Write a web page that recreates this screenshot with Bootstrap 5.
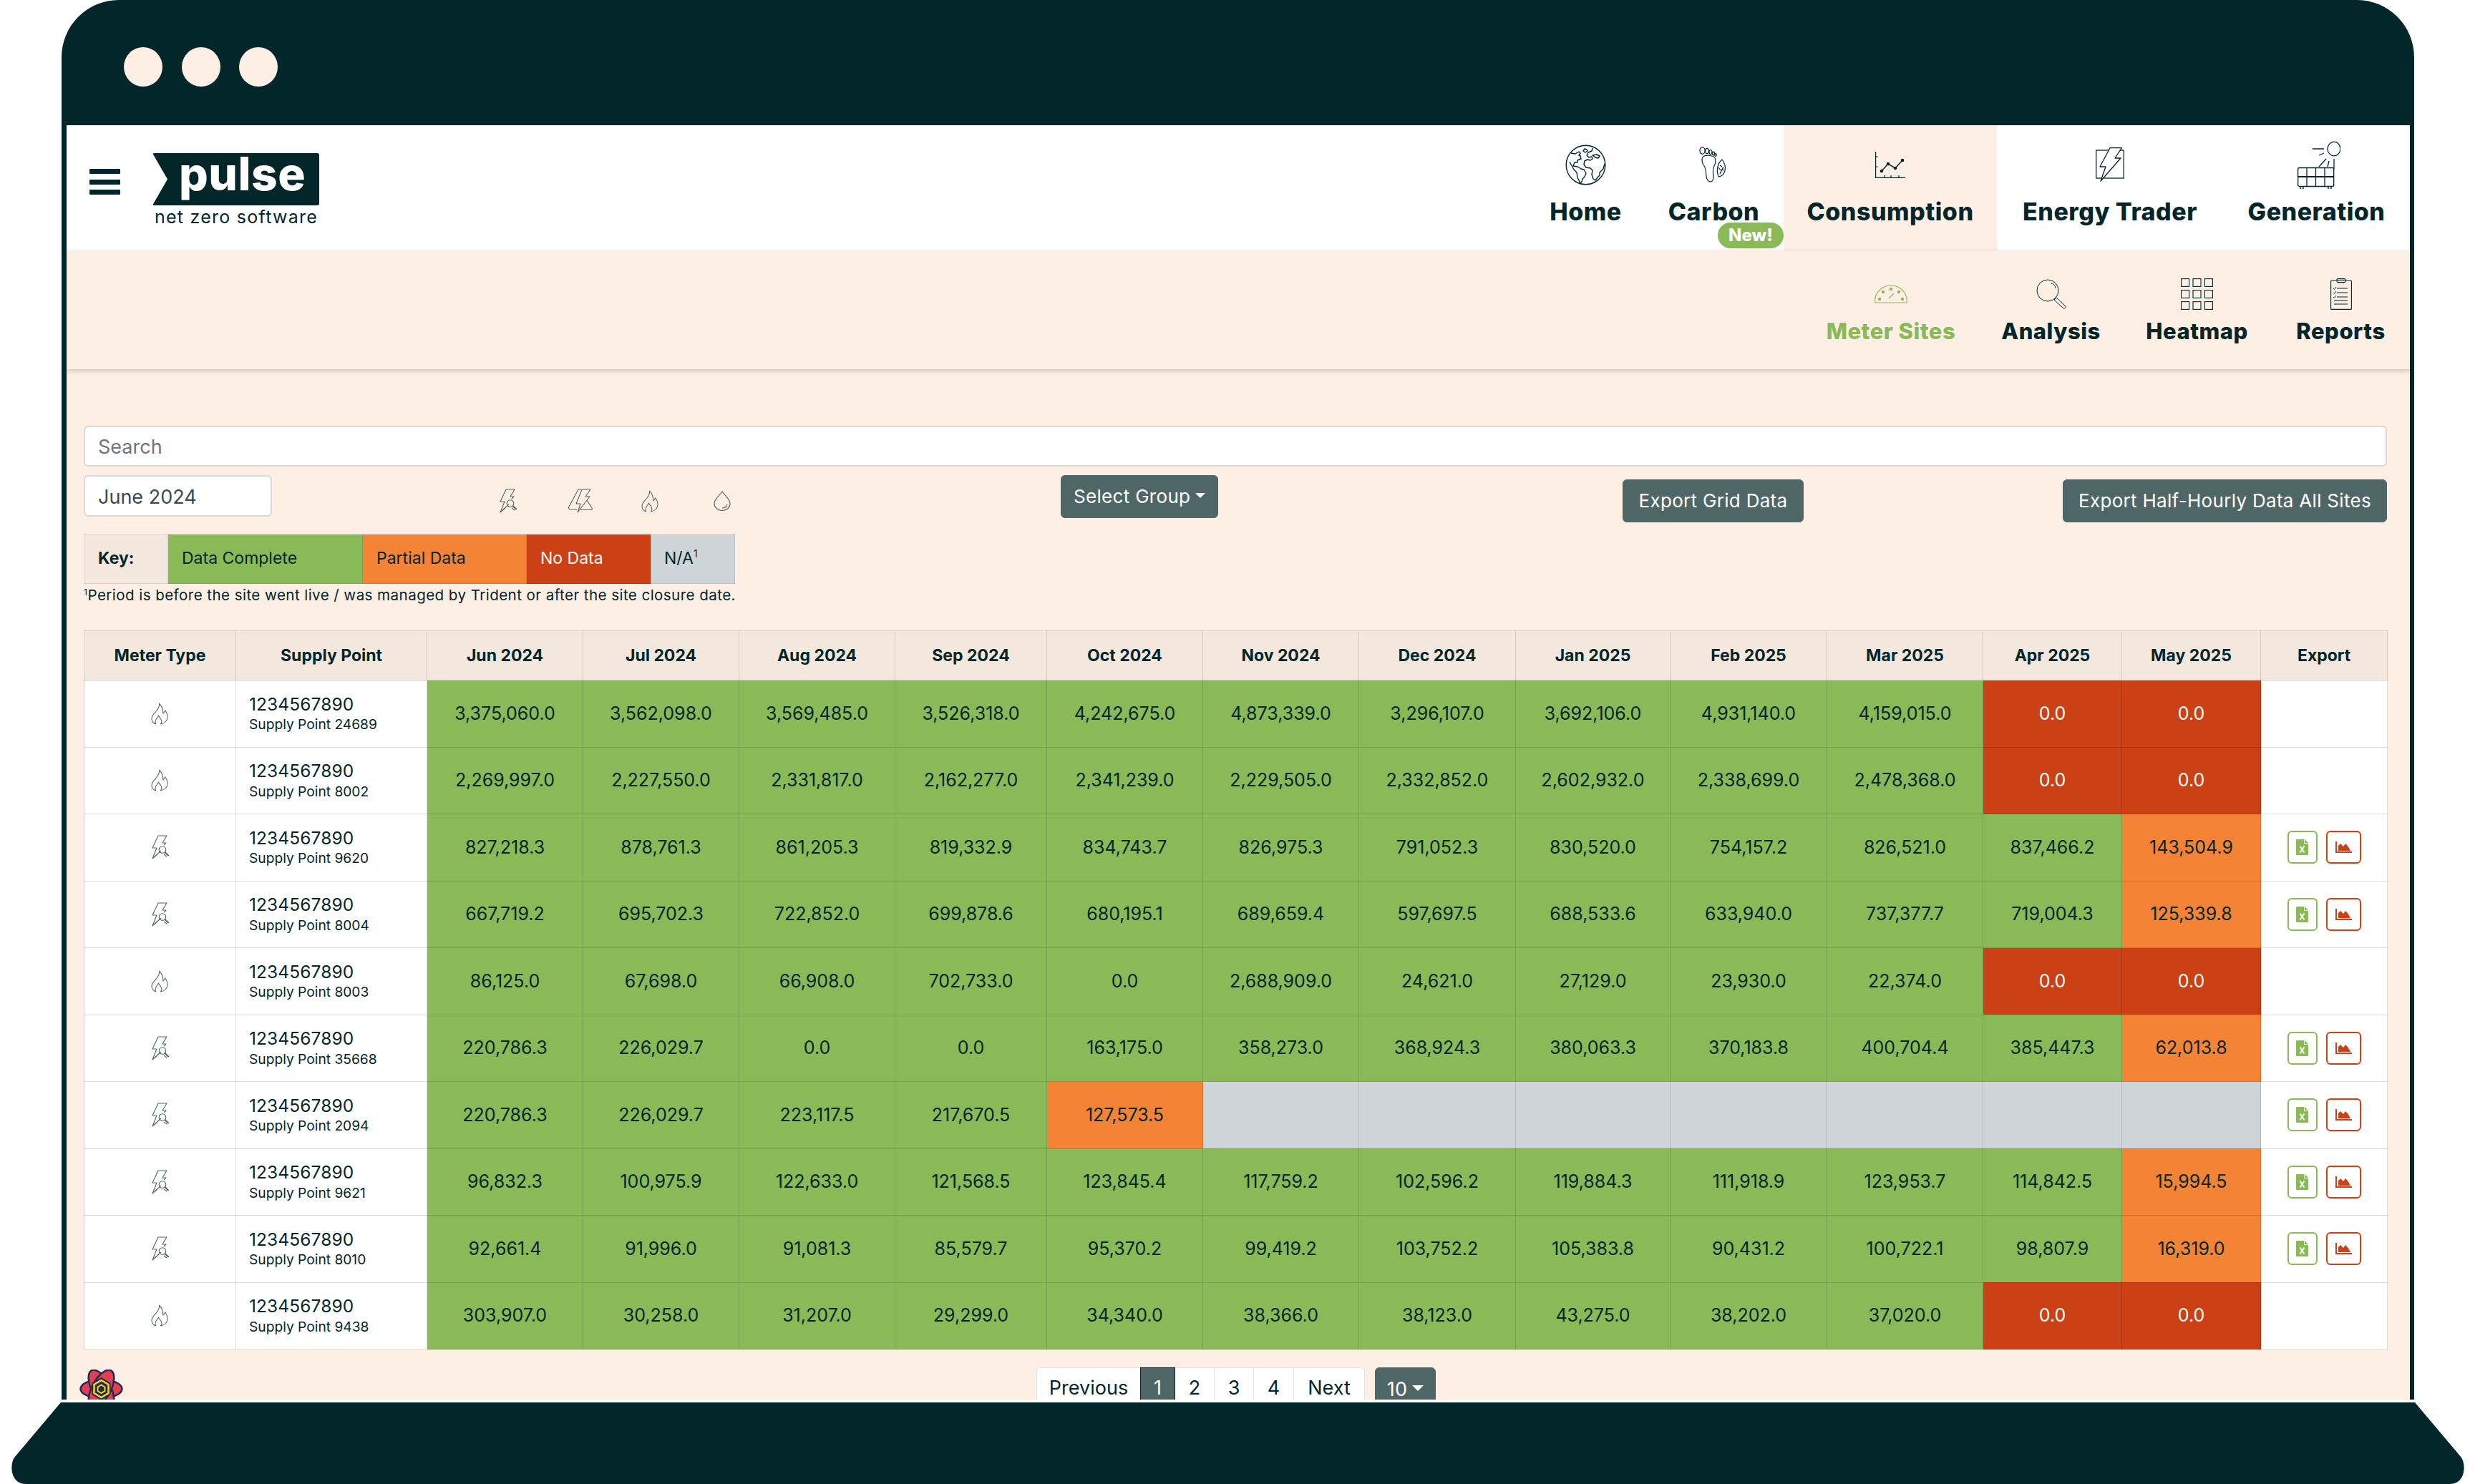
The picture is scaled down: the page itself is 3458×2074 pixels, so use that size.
<!DOCTYPE html>
<html lang="en"><head><meta charset="utf-8"><title>Pulse</title>
<link href="https://cdn.jsdelivr.net/npm/bootstrap@5.3.0/dist/css/bootstrap.min.css" rel="stylesheet">
<style>
:root{--ink:#03262a;--cream:#fdefe4;--tan:#f4e7de;--ok:#8ab957;--part:#f48335;--none:#cc4015;--na:#cfd4d9;--slate:#4f6666}
html,body{margin:0;background:#fff}
body{width:3458px;height:2074px;overflow:hidden;font-family:Inter,"Liberation Sans",sans-serif;color:var(--ink)}
.device{width:3287px;margin-left:86px}
.bezel-top{height:175px;background:var(--ink);border-radius:80px 80px 0 0;padding:66px 0 0 87px;gap:26.5px}
.led{width:54px;height:55px;background:var(--cream)}
.screen{height:1781px;border-left:7px solid var(--ink);border-right:6px solid var(--ink);background:var(--cream);overflow:hidden;width:3287px}
.base-svg{display:block;margin-top:4px}
.topbar{height:176px;background:#fff;padding:0}
.burger{width:43px;margin:61px 45px 0 32px;gap:7.5px}
.burger i{display:block;height:7px;background:var(--ink);border-radius:1px}
.logo-wrap{margin-top:39px}
.logo-flag{width:233px;height:73px;background:var(--ink);color:#fff;font-weight:800;font-size:64px;letter-spacing:.5px;line-height:57px;padding-left:37px;clip-path:polygon(0 0,100% 0,100% 100%,0 100%,21px 50%);border-radius:3px}
.logo-sub{font-size:25px;line-height:24px;letter-spacing:1.25px;margin:4px 0 0 3px;white-space:nowrap}
.tab{height:176px;padding-top:21px;color:var(--ink);text-decoration:none;font-weight:800;font-size:34px;letter-spacing:.5px;line-height:40px;position:relative;white-space:nowrap}
.tab-ico{height:68px;margin-bottom:12px}
.gen-ico{margin-left:7px}
.w-home{width:163px}.w-carbon{width:195px}.w-cons{width:298px}.w-trade{width:316px}.w-gen{width:261px}
.tab-on{background:var(--cream)}
.new-pill{position:absolute;right:0;top:136px;width:92px;height:36px;background:var(--ok);color:#fff;font-size:24px;line-height:36px;letter-spacing:0;text-align:center}
.subbar{height:165px;background:var(--cream);box-shadow:0 2px 7px rgba(60,30,10,.24);position:relative}
.subtab{height:165px;padding-top:37px;color:var(--ink);text-decoration:none;font-weight:800;font-size:31px;letter-spacing:.5px;line-height:36px;white-space:nowrap}
.subtab-ico{height:46px;margin-bottom:11px}
.w-meter{width:248px}.w-ana{width:199px}.w-heat{width:209px}.w-rep{width:193px}
.sub-on{color:var(--ok)}
.content{padding:79px 32px 0 24px}
.fld{height:57px;font-size:27px;padding:2px 18px 0;border-radius:6px;border:2px solid #d6d8da;color:#3b4a4f;font-family:inherit}
.fld::placeholder{color:#6c757d}
.fld-date{width:263px;height:58px}
.ctl-row{height:66px;margin-top:12px}
.type-ico{margin-left:318px;margin-top:19px;height:34px;color:var(--slate)}
.ti2{margin-left:72px}.ti3{margin-left:68px}.ti4{margin-left:76px}
.icon-tint{color:var(--slate)}
.icon-tint svg{display:block;margin:auto}
.btn-slate{background:var(--slate);border-color:var(--slate);color:#fff;font-size:26px;line-height:1;border-radius:6px;padding:0;height:60px;letter-spacing:.3px;white-space:nowrap}
.btn-slate:hover{background:var(--slate);color:#fff}
.b-group{width:220px;margin-left:461px}
.b-grid{width:253px;margin-left:565px;margin-top:6px}
.b-half{width:453px;margin-left:362px;margin-top:6px}
.keyt{width:909px;height:70px;margin:16px 0 0;font-size:23px;table-layout:fixed}
.keyt td{padding:0 0 2px 19px;vertical-align:middle;border:1px solid rgba(0,0,0,.1);color:var(--ink)}
.keyt td.k1{width:117px;background-color:var(--tan);font-weight:700}
.keyt td.k2{width:272px;background-color:var(--ok)}
.keyt td.k3{width:229px;background-color:var(--part)}
.keyt td.k4{width:173px;background-color:var(--none);color:#fff}
.keyt td.k5{width:118px;background-color:var(--na)}
.keyt sup,.foot-note sup{font-size:.6em;top:-.6em}
.foot-note{font-size:20.6px;line-height:24px;letter-spacing:.42px;margin:4px 0 0;white-space:nowrap}
.grid-wrap{margin-top:37px}
.data-grid{width:3218px;height:1004px;table-layout:fixed;margin:0;color:var(--ink);font-size:25px;--bs-table-bg:#fff;--bs-table-color:var(--ink)}
.data-grid th,.data-grid td{padding:0;vertical-align:middle;text-align:center;border:1.5px solid rgba(0,0,0,.13)}
.data-grid th{background-color:var(--tan);font-size:23px;height:69px;font-weight:700}
.data-grid td{height:93.5px}
.data-grid td.c-ok{background-color:var(--ok)}
.data-grid td.c-part{background-color:var(--part)}
.data-grid td.c-none{background-color:var(--none);color:#fff}
.data-grid td.c-na{background-color:var(--na)}
.data-grid td.sp{text-align:left;padding-left:18px;line-height:1}
.sp-id{display:block;font-size:24.5px;letter-spacing:.1px;margin-bottom:7px}
.sp-name{display:block;font-size:19.2px}
.c1{width:212px}.c2{width:267px}.c3{width:218px}.c4{width:212px}.c5{width:219px}.c6{width:216px}.c7{width:194px}.c8{width:177px}
.act{width:42px;height:46px;border:2px solid var(--ok);border-radius:6px;background:#fff}
.act-red{width:49px;border-color:var(--none);margin-left:12px}
.pager-row{height:60px;margin-top:25px;position:relative}
.atom{position:absolute;left:-6px;top:3px}
.pagination{margin:0;margin-left:1331px;--bs-pagination-color:var(--ink);--bs-pagination-border-color:#dee2e6;--bs-pagination-active-bg:var(--slate);--bs-pagination-active-border-color:var(--ink)}
.page-link{height:60px;padding:8px 0 0;text-align:center;line-height:40px;font-size:27px}
.pg-prev{width:146px}.pg-one{width:49px}.pg-two{width:56px}.pg-three{width:56px}.pg-four{width:57px}.pg-next{width:100px}
.b-size{width:85px;margin-left:14px;font-size:27px}
</style></head>
<body>
<svg class="d-none" xmlns="http://www.w3.org/2000/svg">
<symbol id="i-flame" viewBox="0 0 26 32"><path fill="none" stroke="currentColor" stroke-width="1.1" stroke-linejoin="round" d="M12 1c1 5-2 8-5 12C4 16 1 19 1 23c0 4 3 7 6 8-1.500-3-1-5 1-8 1-1.200 2-2.500 3-4.500 .5 2.500 2.500 3.500 3.500 5.500 1.500 2.500 1 5-.5 7 5-1 9-4 10-9 .5-4-1.500-8-3.500-11-.5 2-1.500 3.500-3 4.500C17.500 10 16 5 12 1z"/></symbol>
<symbol id="i-bolt-search" viewBox="0 0 24 34"><g fill="none" stroke="currentColor" stroke-width="1.1" stroke-linejoin="round"><path d="M9 1h12l-6 10h5l-3 3M13 22L1 33l6-15H1L9 1"/><path d="M7 28l-3 2M17 27l4 3"/><circle cx="15" cy="20.500" r="4.800"/><path d="M18.500 24l5 5" stroke-width="2"/></g></symbol>
<symbol id="i-bolt-tri" viewBox="0 0 34 34"><g fill="none" stroke="currentColor" stroke-width="1.100" stroke-linejoin="round"><path d="M19 1h12l-7 10h6L13 33l4-12h-6z"/><path d="M18 1h-4L1 25c-1 2 0 4 2 4h9"/><path d="M26 16l7 11c1 1.500 0 2.500-2 2.500H17"/></g></symbol>
<symbol id="i-drop" viewBox="0 0 24 28"><g fill="none" stroke="currentColor" stroke-width="1.100"><path d="M12 1C9 6 1 11 1 18a11 9.500 0 0 0 22 0C23 11 15 6 12 1z"/><path d="M12 24c3 0 6-1 7-5"/></g></symbol>
<symbol id="i-globe" viewBox="0 0 57 57"><g fill="none" stroke="currentColor" stroke-width="1.400" stroke-linejoin="round"><circle cx="28.500" cy="28.500" r="27.300"/><path d="M8 12l6 1 5-3 2 2-2 3 2 1 1 4-5 2 0 3-4 0-2 5 6 1 5 3 4 1 3 5-2 5-3 3-1 4-2 2-4-8-1-7-4-4-4-7-2-4"/><path d="M27 6l3 1 1 2-3 2-3-2z"/><path d="M38 5l-1 4-5 2-2 4 3 3 4-1 1 3-3 2-4-1-4 2-1 5 3 4 6 1 3 3-1 6 2 6 3 2 3-4 3-3 0-4 5-5 2-7"/><path d="M38 15l6-1 4 2-2 3-4-1z"/></g></symbol>
<symbol id="i-foot" viewBox="0 0 41 50"><g fill="none" stroke="currentColor" stroke-width="1.200" stroke-linejoin="round"><ellipse cx="4.500" cy="5.500" rx="3.500" ry="4.800"/><ellipse cx="11" cy="6" rx="2.300" ry="3.600"/><ellipse cx="16" cy="7.500" rx="2" ry="3"/><ellipse cx="20" cy="9.500" rx="1.500" ry="2.300"/><ellipse cx="23" cy="11.500" rx="1.200" ry="1.800"/><path d="M7 13C3 15 3 22 7 27c3 4 2 8 3 14 1 10 9 10 10 3 0-7-2-12 1-17 3-5 3-13-3-14-4-1-8-1-11 0z"/><path d="M32 18c-5 4-9 13-5 24 8-1 14-12 5-24z"/><path d="M29 38l5-10M30 33l-3-4M31 32l4 1M32 28l-3-2"/></g></symbol>
<symbol id="i-chart" viewBox="0 0 42 37"><g fill="none" stroke="currentColor" stroke-width="1.200"><path d="M.6 0v36.400H42"/><path d="M.6 7h3M.6 21h3M13 36v-3M22 36v-3M33 36v-3"/><path d="M9 27l9-10 10 6 10-11" stroke-width="1.500"/></g><g fill="currentColor"><circle cx="9" cy="27" r="2.300"/><circle cx="18" cy="17" r="2.300"/><circle cx="28" cy="23" r="2.300"/><circle cx="38" cy="12" r="2.300"/></g></symbol>
<symbol id="i-trade" viewBox="0 0 40 48"><rect x=".7" y="4" width="38.600" height="39" fill="none" stroke="currentColor" stroke-width="1.300"/><path d="M20 .7h16.500L27 15h8L7 47l7-20H6z" fill="#fff" stroke="currentColor" stroke-width="1.300" stroke-linejoin="round"/></symbol>
<symbol id="i-gen" viewBox="0 0 60 67"><g fill="none" stroke="currentColor" stroke-width="1.300"><ellipse cx="51" cy="11" rx="9" ry="9.800"/><path d="M21 11h16M30 20l7-3M30 36l10-11M42 36l2-8M51 25v14"/><rect x=".7" y="37.500" width="50" height="26" rx="2"/><path d="M13 37.500v26M25.500 37.500v26M38 37.500v26"/><path d="M.7 50h50" stroke-width="2"/><path d="M4 64v3.500h4V64M43 64v3.500h4V64"/></g></symbol>
<symbol id="i-dome" viewBox="0 0 46 26"><g fill="none" stroke="currentColor" stroke-width="1.200"><path d="M1 25C-1 12 10 1 23 1s24 11 22 24z"/><path d="M20 19l7-7"/></g><g fill="currentColor"><circle cx="12" cy="10" r="2.200"/><circle cx="23" cy="6" r="2.200"/><circle cx="34" cy="10" r="2.200"/><circle cx="7" cy="20" r="2.200"/><circle cx="39" cy="20" r="2.200"/></g></symbol>
<symbol id="i-lens" viewBox="0 0 42 42"><g fill="none" stroke="currentColor" stroke-width="1"><circle cx="16" cy="16" r="15"/><path d="M21 6c4 1 6 4 6 7"/><path d="M25 29l3-3 13 12c1 1-1 4-3 3z"/></g></symbol>
<symbol id="i-heat" viewBox="0 0 45 44"><g fill="none" stroke="currentColor" stroke-width="1.100"><rect x=".6" y=".6" width="11" height="10.800"/><rect x="17" y=".6" width="11" height="10.800"/><rect x="33.400" y=".6" width="11" height="10.800"/><rect x=".6" y="16.600" width="11" height="10.800"/><rect x="17" y="16.600" width="11" height="10.800"/><rect x="33.400" y="16.600" width="11" height="10.800"/><rect x=".6" y="32.600" width="11" height="10.800"/><rect x="17" y="32.600" width="11" height="10.800"/><rect x="33.400" y="32.600" width="11" height="10.800"/></g></symbol>
<symbol id="i-rep" viewBox="0 0 30 44"><g fill="none" stroke="currentColor" stroke-width="1.100"><rect x=".6" y="3" width="28.800" height="40.400" rx="1"/><rect x="9" y=".6" width="12" height="5" rx="1.500"/><path d="M9 14h15M9 20h15M9 26h15M5 31h19M5 36h19"/><path d="M4 14l1.500 1.500L8 12M4 20l1.500 1.500L8 18M4 26l1.500 1.500L8 24" stroke-width=".9"/></g></symbol>
<symbol id="i-xls" viewBox="0 0 17 22"><path d="M1 0h10v6h6v15a1 1 0 0 1-1 1H1a1 1 0 0 1-1-1V1a1 1 0 0 1 1-1z" fill="#8ab957"/><path d="M12 0l5 5h-5z" fill="#8ab957"/><path d="M5.500 9.500l6 9M11.500 9.500l-6 9" stroke="#fff" stroke-width="2" fill="none"/></symbol>
<symbol id="i-area" viewBox="0 0 23 16"><path d="M0 0h2v14h21v2H0z" fill="#cc4015"/><path d="M4 13V6l3-3 4 4 3-4 3 3 4 7z" fill="#cc4015"/></symbol>
</svg>

<div class="device">
  <div class="bezel-top d-flex"><span class="led rounded-circle"></span><span class="led rounded-circle"></span><span class="led rounded-circle"></span></div>
  <div class="screen">
    <nav class="topbar d-flex align-items-start">
      <div class="burger d-flex flex-column"><i></i><i></i><i></i></div>
      <div class="logo-wrap">
        <div class="logo-flag">pulse</div>
        <div class="logo-sub">net zero software</div>
      </div>
      <div class="d-flex ms-auto">
        <a class="tab w-home d-flex flex-column align-items-center" href="#"><span class="tab-ico d-flex align-items-center"><svg width="57" height="57"><use href="#i-globe"/></svg></span>Home</a>
        <a class="tab w-carbon d-flex flex-column align-items-center" href="#"><span class="tab-ico d-flex align-items-center"><svg width="41" height="50"><use href="#i-foot"/></svg></span>Carbon<span class="new-pill rounded-pill">New!</span></a>
        <a class="tab tab-on w-cons d-flex flex-column align-items-center" href="#"><span class="tab-ico d-flex align-items-center"><svg width="42" height="37"><use href="#i-chart"/></svg></span>Consumption</a>
        <a class="tab w-trade d-flex flex-column align-items-center" href="#"><span class="tab-ico d-flex align-items-center"><svg width="40" height="48"><use href="#i-trade"/></svg></span>Energy Trader</a>
        <a class="tab w-gen d-flex flex-column align-items-center" href="#"><span class="tab-ico d-flex align-items-center"><svg class="gen-ico" width="60" height="67"><use href="#i-gen"/></svg></span>Generation</a>
      </div>
    </nav>
    <div class="subbar d-flex justify-content-end">
      <a class="subtab sub-on w-meter d-flex flex-column align-items-center" href="#"><span class="subtab-ico d-flex align-items-center"><svg width="46" height="26"><use href="#i-dome"/></svg></span>Meter Sites</a>
      <a class="subtab w-ana d-flex flex-column align-items-center" href="#"><span class="subtab-ico d-flex align-items-center"><svg width="42" height="42"><use href="#i-lens"/></svg></span>Analysis</a>
      <a class="subtab w-heat d-flex flex-column align-items-center" href="#"><span class="subtab-ico d-flex align-items-center"><svg width="45" height="44"><use href="#i-heat"/></svg></span>Heatmap</a>
      <a class="subtab w-rep d-flex flex-column align-items-center" href="#"><span class="subtab-ico d-flex align-items-center"><svg width="30" height="44"><use href="#i-rep"/></svg></span>Reports</a>
    </div>
    <div class="content">
      <input class="form-control fld" placeholder="Search">
      <div class="ctl-row d-flex align-items-start">
        <input class="form-control fld fld-date flex-shrink-0" value="June 2024">
        <div class="type-ico d-flex align-items-center flex-shrink-0">
          <svg width="24" height="34"><use href="#i-bolt-search"/></svg>
          <svg class="ti2" width="34" height="34"><use href="#i-bolt-tri"/></svg>
          <svg class="ti3" width="25" height="31"><use href="#i-flame"/></svg>
          <svg class="ti4" width="24" height="28"><use href="#i-drop"/></svg>
        </div>
        <button class="btn btn-slate b-group dropdown-toggle flex-shrink-0">Select Group</button>
        <button class="btn btn-slate b-grid flex-shrink-0">Export Grid Data</button>
        <button class="btn btn-slate b-half flex-shrink-0">Export Half-Hourly Data All Sites</button>
      </div>
      <table class="table keyt"><tbody><tr>
        <td class="k1">Key:</td><td class="k2">Data Complete</td><td class="k3">Partial Data</td><td class="k4">No Data</td><td class="k5">N/A<sup>1</sup></td>
      </tr></tbody></table>
      <p class="foot-note"><sup>1</sup>Period is before the site went live / was managed by Trident or after the site closure date.</p>
      <div class="grid-wrap">
      <table class="table data-grid">
        <colgroup><col class="c1"><col class="c2"><col class="c3"><col class="c3"><col class="c3"><col class="c4"><col class="c3"><col class="c3"><col class="c5"><col class="c6"><col class="c5"><col class="c3"><col class="c7"><col class="c7"><col class="c8"></colgroup>
        <thead><tr><th>Meter Type</th><th>Supply Point</th><th>Jun 2024</th><th>Jul 2024</th><th>Aug 2024</th><th>Sep 2024</th><th>Oct 2024</th><th>Nov 2024</th><th>Dec 2024</th><th>Jan 2025</th><th>Feb 2025</th><th>Mar 2025</th><th>Apr 2025</th><th>May 2025</th><th>Export</th></tr></thead>
        <tbody>
<tr><td class="icon-tint"><svg width="25" height="31"><use href="#i-flame"/></svg></td><td class="sp"><span class="sp-id">1234567890</span><span class="sp-name">Supply Point 24689</span></td><td class="c-ok">3,375,060.0</td><td class="c-ok">3,562,098.0</td><td class="c-ok">3,569,485.0</td><td class="c-ok">3,526,318.0</td><td class="c-ok">4,242,675.0</td><td class="c-ok">4,873,339.0</td><td class="c-ok">3,296,107.0</td><td class="c-ok">3,692,106.0</td><td class="c-ok">4,931,140.0</td><td class="c-ok">4,159,015.0</td><td class="c-none">0.0</td><td class="c-none">0.0</td><td></td></tr>
<tr><td class="icon-tint"><svg width="25" height="31"><use href="#i-flame"/></svg></td><td class="sp"><span class="sp-id">1234567890</span><span class="sp-name">Supply Point 8002</span></td><td class="c-ok">2,269,997.0</td><td class="c-ok">2,227,550.0</td><td class="c-ok">2,331,817.0</td><td class="c-ok">2,162,277.0</td><td class="c-ok">2,341,239.0</td><td class="c-ok">2,229,505.0</td><td class="c-ok">2,332,852.0</td><td class="c-ok">2,602,932.0</td><td class="c-ok">2,338,699.0</td><td class="c-ok">2,478,368.0</td><td class="c-none">0.0</td><td class="c-none">0.0</td><td></td></tr>
<tr><td class="icon-tint"><svg width="24" height="34"><use href="#i-bolt-search"/></svg></td><td class="sp"><span class="sp-id">1234567890</span><span class="sp-name">Supply Point 9620</span></td><td class="c-ok">827,218.3</td><td class="c-ok">878,761.3</td><td class="c-ok">861,205.3</td><td class="c-ok">819,332.9</td><td class="c-ok">834,743.7</td><td class="c-ok">826,975.3</td><td class="c-ok">791,052.3</td><td class="c-ok">830,520.0</td><td class="c-ok">754,157.2</td><td class="c-ok">826,521.0</td><td class="c-ok">837,466.2</td><td class="c-part">143,504.9</td><td><div class="d-flex justify-content-center"><button class="act p-0 d-flex align-items-center justify-content-center"><svg width="17" height="22"><use href="#i-xls"/></svg></button><button class="act act-red p-0 d-flex align-items-center justify-content-center"><svg width="23" height="16"><use href="#i-area"/></svg></button></div></td></tr>
<tr><td class="icon-tint"><svg width="24" height="34"><use href="#i-bolt-search"/></svg></td><td class="sp"><span class="sp-id">1234567890</span><span class="sp-name">Supply Point 8004</span></td><td class="c-ok">667,719.2</td><td class="c-ok">695,702.3</td><td class="c-ok">722,852.0</td><td class="c-ok">699,878.6</td><td class="c-ok">680,195.1</td><td class="c-ok">689,659.4</td><td class="c-ok">597,697.5</td><td class="c-ok">688,533.6</td><td class="c-ok">633,940.0</td><td class="c-ok">737,377.7</td><td class="c-ok">719,004.3</td><td class="c-part">125,339.8</td><td><div class="d-flex justify-content-center"><button class="act p-0 d-flex align-items-center justify-content-center"><svg width="17" height="22"><use href="#i-xls"/></svg></button><button class="act act-red p-0 d-flex align-items-center justify-content-center"><svg width="23" height="16"><use href="#i-area"/></svg></button></div></td></tr>
<tr><td class="icon-tint"><svg width="25" height="31"><use href="#i-flame"/></svg></td><td class="sp"><span class="sp-id">1234567890</span><span class="sp-name">Supply Point 8003</span></td><td class="c-ok">86,125.0</td><td class="c-ok">67,698.0</td><td class="c-ok">66,908.0</td><td class="c-ok">702,733.0</td><td class="c-ok">0.0</td><td class="c-ok">2,688,909.0</td><td class="c-ok">24,621.0</td><td class="c-ok">27,129.0</td><td class="c-ok">23,930.0</td><td class="c-ok">22,374.0</td><td class="c-none">0.0</td><td class="c-none">0.0</td><td></td></tr>
<tr><td class="icon-tint"><svg width="24" height="34"><use href="#i-bolt-search"/></svg></td><td class="sp"><span class="sp-id">1234567890</span><span class="sp-name">Supply Point 35668</span></td><td class="c-ok">220,786.3</td><td class="c-ok">226,029.7</td><td class="c-ok">0.0</td><td class="c-ok">0.0</td><td class="c-ok">163,175.0</td><td class="c-ok">358,273.0</td><td class="c-ok">368,924.3</td><td class="c-ok">380,063.3</td><td class="c-ok">370,183.8</td><td class="c-ok">400,704.4</td><td class="c-ok">385,447.3</td><td class="c-part">62,013.8</td><td><div class="d-flex justify-content-center"><button class="act p-0 d-flex align-items-center justify-content-center"><svg width="17" height="22"><use href="#i-xls"/></svg></button><button class="act act-red p-0 d-flex align-items-center justify-content-center"><svg width="23" height="16"><use href="#i-area"/></svg></button></div></td></tr>
<tr><td class="icon-tint"><svg width="24" height="34"><use href="#i-bolt-search"/></svg></td><td class="sp"><span class="sp-id">1234567890</span><span class="sp-name">Supply Point 2094</span></td><td class="c-ok">220,786.3</td><td class="c-ok">226,029.7</td><td class="c-ok">223,117.5</td><td class="c-ok">217,670.5</td><td class="c-part">127,573.5</td><td class="c-na"></td><td class="c-na"></td><td class="c-na"></td><td class="c-na"></td><td class="c-na"></td><td class="c-na"></td><td class="c-na"></td><td><div class="d-flex justify-content-center"><button class="act p-0 d-flex align-items-center justify-content-center"><svg width="17" height="22"><use href="#i-xls"/></svg></button><button class="act act-red p-0 d-flex align-items-center justify-content-center"><svg width="23" height="16"><use href="#i-area"/></svg></button></div></td></tr>
<tr><td class="icon-tint"><svg width="24" height="34"><use href="#i-bolt-search"/></svg></td><td class="sp"><span class="sp-id">1234567890</span><span class="sp-name">Supply Point 9621</span></td><td class="c-ok">96,832.3</td><td class="c-ok">100,975.9</td><td class="c-ok">122,633.0</td><td class="c-ok">121,568.5</td><td class="c-ok">123,845.4</td><td class="c-ok">117,759.2</td><td class="c-ok">102,596.2</td><td class="c-ok">119,884.3</td><td class="c-ok">111,918.9</td><td class="c-ok">123,953.7</td><td class="c-ok">114,842.5</td><td class="c-part">15,994.5</td><td><div class="d-flex justify-content-center"><button class="act p-0 d-flex align-items-center justify-content-center"><svg width="17" height="22"><use href="#i-xls"/></svg></button><button class="act act-red p-0 d-flex align-items-center justify-content-center"><svg width="23" height="16"><use href="#i-area"/></svg></button></div></td></tr>
<tr><td class="icon-tint"><svg width="24" height="34"><use href="#i-bolt-search"/></svg></td><td class="sp"><span class="sp-id">1234567890</span><span class="sp-name">Supply Point 8010</span></td><td class="c-ok">92,661.4</td><td class="c-ok">91,996.0</td><td class="c-ok">91,081.3</td><td class="c-ok">85,579.7</td><td class="c-ok">95,370.2</td><td class="c-ok">99,419.2</td><td class="c-ok">103,752.2</td><td class="c-ok">105,383.8</td><td class="c-ok">90,431.2</td><td class="c-ok">100,722.1</td><td class="c-ok">98,807.9</td><td class="c-part">16,319.0</td><td><div class="d-flex justify-content-center"><button class="act p-0 d-flex align-items-center justify-content-center"><svg width="17" height="22"><use href="#i-xls"/></svg></button><button class="act act-red p-0 d-flex align-items-center justify-content-center"><svg width="23" height="16"><use href="#i-area"/></svg></button></div></td></tr>
<tr><td class="icon-tint"><svg width="25" height="31"><use href="#i-flame"/></svg></td><td class="sp"><span class="sp-id">1234567890</span><span class="sp-name">Supply Point 9438</span></td><td class="c-ok">303,907.0</td><td class="c-ok">30,258.0</td><td class="c-ok">31,207.0</td><td class="c-ok">29,299.0</td><td class="c-ok">34,340.0</td><td class="c-ok">38,366.0</td><td class="c-ok">38,123.0</td><td class="c-ok">43,275.0</td><td class="c-ok">38,202.0</td><td class="c-ok">37,020.0</td><td class="c-none">0.0</td><td class="c-none">0.0</td><td></td></tr>
        </tbody>
      </table>
      </div>
      <div class="pager-row d-flex align-items-start">
        <svg class="atom" width="61" height="60" viewBox="0 0 61 60"><g fill="#e63c55" stroke="#1d2b4f" stroke-width="2.500"><ellipse cx="30.500" cy="27" rx="29" ry="13"/><ellipse cx="30.500" cy="27" rx="29" ry="13" transform="rotate(62 30.500 27)"/><ellipse cx="30.500" cy="27" rx="29" ry="13" transform="rotate(-62 30.500 27)"/></g><path d="M30.500 11l13 8v16l-13 8-13-8V19z" fill="#1d2b4f"/><path d="M30.500 15l10 6v12l-10 6-10-6V21z" fill="none" stroke="#f5d327" stroke-width="2.500"/><path d="M30.500 21.500l5 3v5.500l-5 3-5-3v-5.500z" fill="none" stroke="#f5d327" stroke-width="2"/></svg>
        <ul class="pagination">
          <li class="page-item"><a class="page-link pg-prev" href="#">Previous</a></li>
          <li class="page-item active"><a class="page-link pg-one" href="#">1</a></li>
          <li class="page-item"><a class="page-link pg-two" href="#">2</a></li>
          <li class="page-item"><a class="page-link pg-three" href="#">3</a></li>
          <li class="page-item"><a class="page-link pg-four" href="#">4</a></li>
          <li class="page-item"><a class="page-link pg-next" href="#">Next</a></li>
        </ul>
        <button class="btn btn-slate b-size dropdown-toggle">10</button>
      </div>
    </div>
  </div>
</div>
<svg class="base-svg" width="3458" height="114" viewBox="0 0 3458 114"><path d="M85 0H3374L3439 77C3446 88 3444 114 3423 114H36C15 114 13 88 20 77Z" fill="#03262a"/></svg>
</body></html>
